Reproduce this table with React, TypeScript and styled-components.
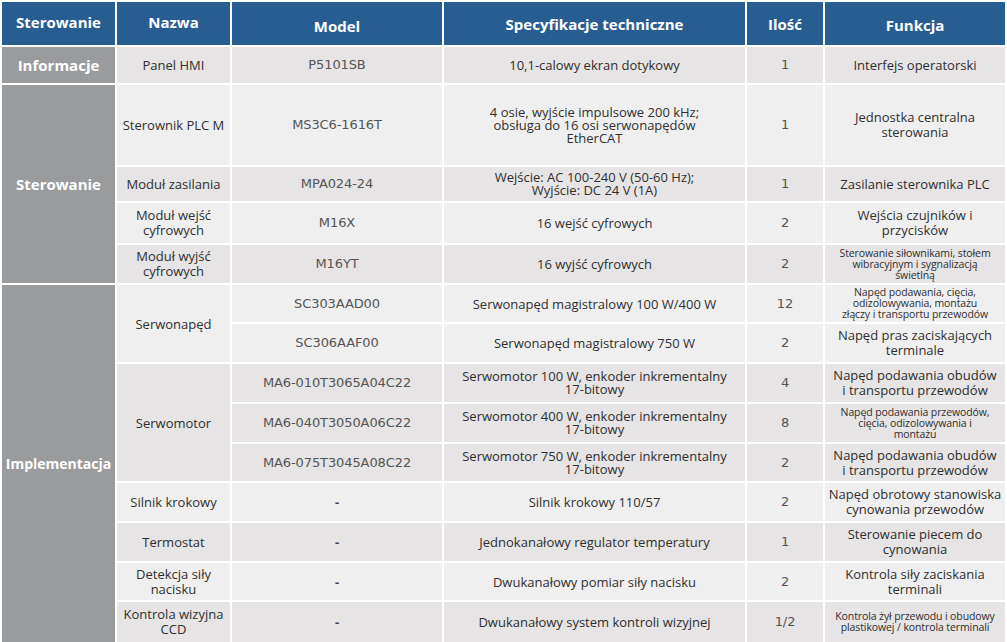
import React from "react";
import styled, { createGlobalStyle, css } from "styled-components";

const Global = createGlobalStyle`
  html, body {
    margin: 0;
    padding: 0;
    background: #ffffff;
    overflow: hidden;
  }
  body {
    font-family: "Open Sans", "Liberation Sans", sans-serif;
  }
`;

const Table = styled.table`
  width: 1007px;
  border-collapse: separate;
  border-spacing: 2px;
  table-layout: fixed;
  background: #ffffff;
  font-family: "Open Sans", "Liberation Sans", sans-serif;
  color: #333333;
`;

const Row = styled.tr<{ $h: number }>`
  height: ${(p) => p.$h}px;
`;

const HeadCell = styled.th<{ $w: number; $dy?: number }>`
  width: ${(p) => p.$w}px;
  background: #285d92;
  color: #ffffff;
  font-weight: 700;
  font-size: 15px;
  line-height: 18px;
  text-align: center;
  vertical-align: middle;
  padding: ${(p) => (p.$dy ?? 0) > 0 ? `${p.$dy}px 0 0 0` : `0 0 ${-(p.$dy ?? 0)}px 0`};
`;

const GroupCell = styled.td<{ $size?: number }>`
  background: #9a9b9d;
  color: #ffffff;
  font-weight: 700;
  font-size: ${(p) => p.$size ?? 15}px;
  text-align: center;
  vertical-align: middle;
  padding: 0;
`;

const Cell = styled.td<{
  $shade: "light" | "dark";
  $kind?: "text" | "mono" | "dash";
  $small?: boolean;
  $lh?: number;
}>`
  background: ${(p) => (p.$shade === "dark" ? "#e6e4e4" : "#f0efef")};
  text-align: center;
  vertical-align: middle;
  padding: 0 3px;
  color: #2f2f2f;
  font-size: 13px;
  line-height: ${(p) => p.$lh ?? 14}px;
  ${(p) =>
    p.$kind === "mono" &&
    css`
      font-family: "DejaVu Sans", "Liberation Sans", sans-serif;
      font-size: 13px;
      color: #555555;
      letter-spacing: -0.1px;
    `}
  ${(p) =>
    p.$kind === "dash" &&
    css`
      font-weight: 700;
      color: #444444;
    `}
  ${(p) =>
    p.$small &&
    css`
      font-size: 10.5px;
      line-height: 11px;
      letter-spacing: -0.1px;
    `}
`;

const Lines: React.FC<{ text: string }> = ({ text }) => (
  <>
    {text.split("\n").map((l, i, arr) => (
      <React.Fragment key={i}>
        {l}
        {i < arr.length - 1 && <br />}
      </React.Fragment>
    ))}
  </>
);

export default function App() {
  return (
    <>
      <Global />
      <Table>
        <thead>
          <Row $h={43}>
            <HeadCell $w={113} $dy={-3}>Sterowanie</HeadCell>
            <HeadCell $w={113} $dy={-4}>Nazwa</HeadCell>
            <HeadCell $w={210} $dy={4}>Model</HeadCell>
            <HeadCell $w={301} $dy={1}>Specyfikacje techniczne</HeadCell>
            <HeadCell $w={76} $dy={1}>Ilość</HeadCell>
            <HeadCell $w={180} $dy={2}>Funkcja</HeadCell>
          </Row>
        </thead>
        <tbody>
          <Row $h={36}>
            <GroupCell>Informacje</GroupCell>
            <Cell $shade="dark">Panel HMI</Cell>
            <Cell $shade="dark" $kind="mono">P5101SB</Cell>
            <Cell $shade="dark">10,1-calowy ekran dotykowy</Cell>
            <Cell $shade="dark" $kind="mono">1</Cell>
            <Cell $shade="dark">Interfejs operatorski</Cell>
          </Row>

          <Row $h={80}>
            <GroupCell rowSpan={4}>Sterowanie</GroupCell>
            <Cell $shade="light">Sterownik PLC M</Cell>
            <Cell $shade="light" $kind="mono">MS3C6-1616T</Cell>
            <Cell $shade="light" $lh={13}>
              <Lines text={"4 osie, wyjście impulsowe 200 kHz;\nobsługa do 16 osi serwonapędów\nEtherCAT"} />
            </Cell>
            <Cell $shade="light" $kind="mono">1</Cell>
            <Cell $shade="light" $lh={15}>
              <Lines text={"Jednostka centralna\nsterowania"} />
            </Cell>
          </Row>
          <Row $h={34}>
            <Cell $shade="dark">Moduł zasilania</Cell>
            <Cell $shade="dark" $kind="mono">MPA024-24</Cell>
            <Cell $shade="dark" $lh={13}>
              <Lines text={"Wejście: AC 100-240 V (50-60 Hz);\nWyjście: DC 24 V (1A)"} />
            </Cell>
            <Cell $shade="dark" $kind="mono">1</Cell>
            <Cell $shade="dark">Zasilanie sterownika PLC</Cell>
          </Row>
          <Row $h={40}>
            <Cell $shade="light" $lh={15}>
              <Lines text={"Moduł wejść\ncyfrowych"} />
            </Cell>
            <Cell $shade="light" $kind="mono">M16X</Cell>
            <Cell $shade="light">16 wejść cyfrowych</Cell>
            <Cell $shade="light" $kind="mono">2</Cell>
            <Cell $shade="light" $lh={15}>
              <Lines text={"Wejścia czujników i\nprzycisków"} />
            </Cell>
          </Row>
          <Row $h={38}>
            <Cell $shade="dark" $lh={15}>
              <Lines text={"Moduł wyjść\ncyfrowych"} />
            </Cell>
            <Cell $shade="dark" $kind="mono">M16YT</Cell>
            <Cell $shade="dark">16 wyjść cyfrowych</Cell>
            <Cell $shade="dark" $kind="mono">2</Cell>
            <Cell $shade="dark" $small>
              <Lines text={"Sterowanie siłownikami, stołem\nwibracyjnym i sygnalizacją\nświetlną"} />
            </Cell>
          </Row>

          <Row $h={37}>
            <GroupCell rowSpan={10} $size={14}>Implementacja</GroupCell>
            <Cell $shade="light" rowSpan={2}>Serwonapęd</Cell>
            <Cell $shade="light" $kind="mono">SC303AAD00</Cell>
            <Cell $shade="light">Serwonapęd magistralowy 100 W/400 W</Cell>
            <Cell $shade="light" $kind="mono">12</Cell>
            <Cell $shade="light" $small>
              <Lines text={"Napęd podawania, cięcia,\nodizolowywania, montażu\nzłączy i transportu przewodów"} />
            </Cell>
          </Row>
          <Row $h={38}>
            <Cell $shade="light" $kind="mono">SC306AAF00</Cell>
            <Cell $shade="light">Serwonapęd magistralowy 750 W</Cell>
            <Cell $shade="light" $kind="mono">2</Cell>
            <Cell $shade="light" $lh={15}>
              <Lines text={"Napęd pras zaciskających\nterminale"} />
            </Cell>
          </Row>
          <Row $h={38}>
            <Cell $shade="dark" rowSpan={3}>Serwomotor</Cell>
            <Cell $shade="dark" $kind="mono">MA6-010T3065A04C22</Cell>
            <Cell $shade="dark" $lh={13}>
              <Lines text={"Serwomotor 100 W, enkoder inkrementalny\n17-bitowy"} />
            </Cell>
            <Cell $shade="dark" $kind="mono">4</Cell>
            <Cell $shade="dark" $lh={15}>
              <Lines text={"Napęd podawania obudów\ni transportu przewodów"} />
            </Cell>
          </Row>
          <Row $h={38}>
            <Cell $shade="dark" $kind="mono">MA6-040T3050A06C22</Cell>
            <Cell $shade="dark" $lh={13}>
              <Lines text={"Serwomotor 400 W, enkoder inkrementalny\n17-bitowy"} />
            </Cell>
            <Cell $shade="dark" $kind="mono">8</Cell>
            <Cell $shade="dark" $small>
              <Lines text={"Napęd podawania przewodów,\ncięcia, odizolowywania i\nmontażu"} />
            </Cell>
          </Row>
          <Row $h={37}>
            <Cell $shade="dark" $kind="mono">MA6-075T3045A08C22</Cell>
            <Cell $shade="dark" $lh={13}>
              <Lines text={"Serwomotor 750 W, enkoder inkrementalny\n17-bitowy"} />
            </Cell>
            <Cell $shade="dark" $kind="mono">2</Cell>
            <Cell $shade="dark" $lh={15}>
              <Lines text={"Napęd podawania obudów\ni transportu przewodów"} />
            </Cell>
          </Row>
          <Row $h={38}>
            <Cell $shade="light">Silnik krokowy</Cell>
            <Cell $shade="light" $kind="dash">-</Cell>
            <Cell $shade="light">Silnik krokowy 110/57</Cell>
            <Cell $shade="light" $kind="mono">2</Cell>
            <Cell $shade="light" $lh={15}>
              <Lines text={"Napęd obrotowy stanowiska\ncynowania przewodów"} />
            </Cell>
          </Row>
          <Row $h={38}>
            <Cell $shade="dark">Termostat</Cell>
            <Cell $shade="dark" $kind="dash">-</Cell>
            <Cell $shade="dark">Jednokanałowy regulator temperatury</Cell>
            <Cell $shade="dark" $kind="mono">1</Cell>
            <Cell $shade="dark" $lh={15}>
              <Lines text={"Sterowanie piecem do\ncynowania"} />
            </Cell>
          </Row>
          <Row $h={37}>
            <Cell $shade="light" $lh={15}>
              <Lines text={"Detekcja siły\nnacisku"} />
            </Cell>
            <Cell $shade="light" $kind="dash">-</Cell>
            <Cell $shade="light">Dwukanałowy pomiar siły nacisku</Cell>
            <Cell $shade="light" $kind="mono">2</Cell>
            <Cell $shade="light" $lh={15}>
              <Lines text={"Kontrola siły zaciskania\nterminali"} />
            </Cell>
          </Row>
          <Row $h={40}>
            <Cell $shade="dark" $lh={15}>
              <Lines text={"Kontrola wizyjna\nCCD"} />
            </Cell>
            <Cell $shade="dark" $kind="dash">-</Cell>
            <Cell $shade="dark">Dwukanałowy system kontroli wizyjnej</Cell>
            <Cell $shade="dark" $kind="mono">1/2</Cell>
            <Cell $shade="dark" $small $lh={13}>
              <Lines text={"Kontrola żył przewodu i obudowy\nplastikowej / kontrola terminali"} />
            </Cell>
          </Row>
        </tbody>
      </Table>
    </>
  );
}
